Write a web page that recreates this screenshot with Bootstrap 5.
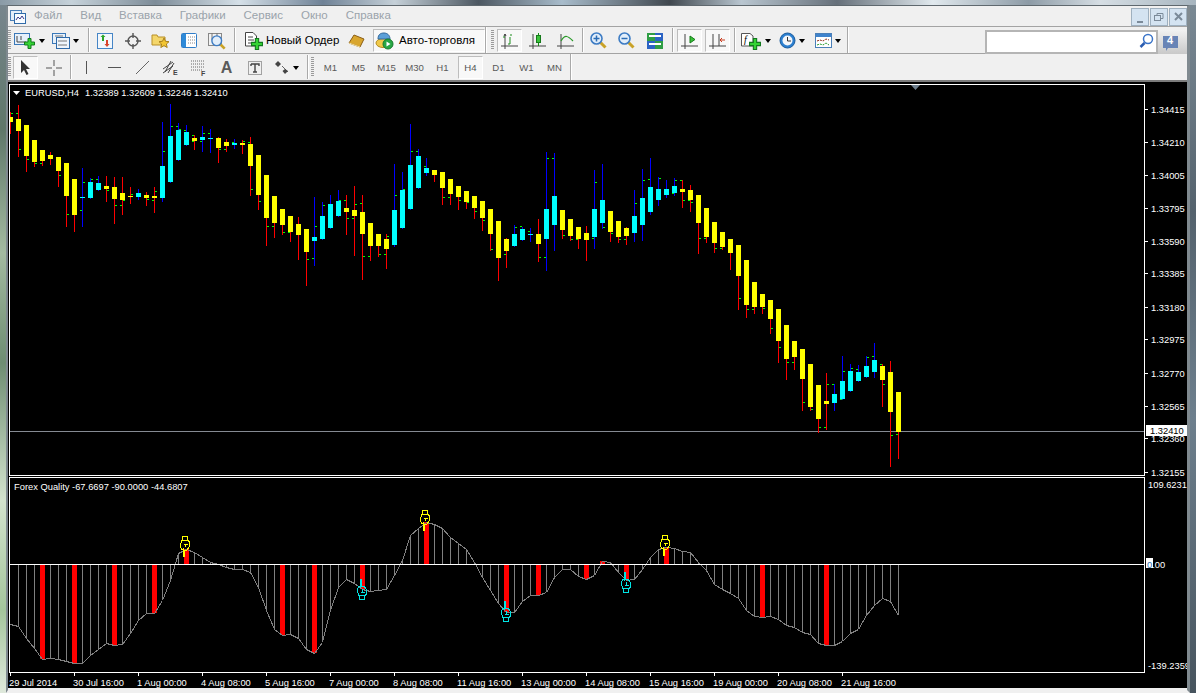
<!DOCTYPE html>
<html lang="ru">
<head>
    <meta charset="UTF-8">
    <meta name="viewport" content="width=device-width, initial-scale=1.0">
    <title>MetaTrader</title>
    <link href="https://cdn.jsdelivr.net/npm/bootstrap@5.3.0/dist/css/bootstrap.min.css" rel="stylesheet">
    <style>
        html, body { height: 100%; }
        body {
            margin: 0;
            overflow: hidden;
            background: #f0f0f0;
            font-family: "Liberation Sans", Arial, sans-serif;
            font-size: 11px;
            color: #000;
        }
        .desk { width: 1196px; height: 693px; }
        .desk-top {
            height: 5px;
            background: linear-gradient(90deg, #8a9aa6 0, #c6d2da 6%, #7d8c98 13%, #d5e0e8 20%, #6f8296 27%, #c5d0d8 33%, #4d5862 40%, #a8bccb 47%, #40484f 56%, #b9c6d0 62%, #66707a 70%, #e1e9ee 78%, #8d9ba6 86%, #d6dee4 92%, #a7b5bf 100%);
            border-bottom: 0;
        }
        .desk-left {
            width: 6px;
            background: linear-gradient(180deg, #78868e 0, #5f7769 18%, #a3baa0 36%, #6e8d72 52%, #d3e3cd 72%, #a4c59c 88%, #dfe9dc 100%);
        }
        .desk-right {
            width: 6px;
            background: linear-gradient(180deg, #7a8994 0, #54626d 30%, #6d7f8d 60%, #47545e 100%);
        }
        .win {
            width: 1184px;
            background: #f0f0f0;
            border-top: 1px solid #5f686e;
            border-left: 2px solid #7f898f;
            border-right: 3px solid #808a90;
            border-bottom: 3px solid #f0f0f0;
        }
        .menu-row { height: 20px; }
        .app-icon { margin-left: 2px; margin-right: 8px; }
        .menu-item { color: #9aa3ab; font-size: 11.5px; margin-right: 18px; }
        .win-btn {
            width: 18px;
            height: 18px;
            margin-left: 1px;
            margin-top: 1px;
            border: 1px solid #9fb0bf;
            background: #d4e3f1;
        }
        .tb-row { height: 27px; border-top: 1px solid #a3a3a3; }
        .tb-group { padding-top: 2px; height: 26px; }
        .grip {
            width: 3px;
            height: 20px;
            margin-top: 1px;
            background: repeating-linear-gradient(180deg, #9a9a9a 0 1px, transparent 1px 2px);
        }
        .grip-a { margin-right: 2px; }
        .grip-b { margin-left: 4px; margin-right: 3px; }
        .tb-btn {
            --bs-btn-padding-x: 0;
            --bs-btn-padding-y: 0;
            --bs-btn-border-radius: 0;
            --bs-btn-border-width: 1px;
            --bs-btn-border-color: transparent;
            --bs-btn-active-border-color: #bdbdbd;
            --bs-btn-active-bg: #f8f8f8;
            --bs-btn-active-color: #555;
            --bs-btn-font-size: 9.6px;
            --bs-btn-color: #5a5a5a;
            --bs-btn-line-height: 1;
            width: 25px;
            height: 23px;
            margin-right: 3px;
            display: flex;
            align-items: center;
            justify-content: center;
            flex: none;
        }
        .tb-btn.active { border-right-color: #fff; border-bottom-color: #fff; }
        .tb-drop { width: 33px; gap: 3px; }
        .tb-order { width: 103px; justify-content: flex-start; padding-left: 5px; gap: 3px; --bs-btn-font-size: 11.5px; --bs-btn-color: #000; }
        .tb-auto { width: 112px; margin-left: 1px; margin-right: 0; justify-content: flex-start; padding-left: 1px; gap: 5px; --bs-btn-font-size: 11.5px; --bs-btn-active-color: #000; }
        .tb-sep { width: 2px; height: 24px; margin: -1px 2px 0; background: #a9a9a9; border-right: 1px solid #fff; flex: none; }
        .sep-wide { margin-left: 3px; }
        .sep-tight { margin-left: 1px; }
        .sep-after { margin-right: 3px; }
        .tb-end { width: 2px; height: 27px; margin-top: -2px; background: #a9a9a9; border-right: 1px solid #fff; flex: none; }
        .caret { width: 0; height: 0; border: 3.5px solid transparent; border-top: 4px solid #000; border-bottom: 0; flex: none; }
        .search-box { width: 173px; height: 24px; margin-top: 1px; margin-right: 0; }
        .search-box .form-control {
            border: 2px solid #b5b5b5;
            border-radius: 0;
            padding: 0 22px 0 4px;
            font-size: 11px;
            height: 24px;
        }
        .search-icon { right: 4px; top: 3px; }
        .chat-btn {
            --bs-btn-border-radius: 0;
            --bs-btn-padding-x: 0;
            --bs-btn-padding-y: 0;
            --bs-btn-border-width: 0;
            width: 29px;
            height: 24px;
            margin-top: 1px;
            margin-right: 0;
            background: linear-gradient(180deg, #f1f1f1, #c9c9c9);
        }
        .chat-num { left: 0; width: 24px; top: 4px; color: #fff; font-weight: 700; font-size: 11px; line-height: 12px; text-align: center; }
        .chart-wrap { border-top: 2px solid #7c7c7c; background: #000; height: 608px; overflow: hidden; }
        .chart-wrap svg { display: block; }
        .chart-wrap rect, .chart-wrap polyline, .hand { shape-rendering: crispEdges; }
        .ct { font-family: "Liberation Sans", Arial, sans-serif; font-size: 9.33px; fill: #fff; }
    </style>
</head>
<body>
<svg width="0" height="0" class="position-absolute">
    <defs>
        <symbol id="plus" viewBox="0 0 11 11"><polygon points="4,.5 7,.5 7,4 10.5,4 10.5,7 7,7 7,10.5 4,10.5 4,7 .5,7 .5,4 4,4" fill="#35d335" stroke="#13791f"/></symbol>
        <symbol id="lens" viewBox="0 0 17 17"><path d="M10.5 10.5L15.5 15.5" stroke="#c9a227" stroke-width="3"/><circle cx="6.5" cy="6.5" r="5.5" fill="#e2eefa" stroke="#3d7cc4" stroke-width="1.6"/></symbol>
    </defs>
</svg>
<div class="desk d-flex flex-column">
    <div class="desk-top"></div>
    <div class="d-flex flex-grow-1">
        <div class="desk-left"></div>
        <div class="win d-flex flex-column">
            <!-- меню -->
            <div class="menu-row d-flex align-items-center">
                <svg class="app-icon" width="16" height="16" viewBox="0 0 16 16"><rect x=".5" y="2.5" width="11" height="10" fill="#e4eefa" stroke="#4a7fb8"/><rect x="4.5" y="5.5" width="11" height="10" fill="#f7fbff" stroke="#2f6aa8"/><path d="M6 12l2-3 2 2 2-3 2 3" fill="none" stroke="#3a3a8a"/></svg>
                <span class="menu-item">Файл</span>
                <span class="menu-item">Вид</span>
                <span class="menu-item">Вставка</span>
                <span class="menu-item">Графики</span>
                <span class="menu-item">Сервис</span>
                <span class="menu-item">Окно</span>
                <span class="menu-item">Справка</span>
                <div class="ms-auto d-flex">
                    <div class="win-btn d-flex align-items-end justify-content-center"><svg width="10" height="7" viewBox="0 0 10 7"><rect x="2" y="3" width="6" height="2" fill="#7b8a99"/></svg></div>
                    <div class="win-btn d-flex align-items-center justify-content-center"><svg width="10" height="10" viewBox="0 0 10 10" fill="none" stroke="#7b8a99"><rect x=".5" y="3.5" width="6" height="5"/><path d="M3 3V1.5H9V6.5H7" /></svg></div>
                    <div class="win-btn d-flex align-items-center justify-content-center"><svg width="9" height="9" viewBox="0 0 9 9" stroke="#7b8a99" stroke-width="2"><path d="M1 1L8 8M8 1L1 8"/></svg></div>
                </div>
            </div>

            <!-- верхняя панель -->
            <div class="tb-row d-flex">
                <div class="tb-group d-flex">
                    <div class="grip grip-a"></div>
                    <button class="btn tb-btn tb-drop"><svg width="22" height="16" viewBox="0 0 22 16"><rect x=".5" y=".5" width="15" height="11" fill="#e6f0fa" stroke="#3a78b8"/><path d="M3 3v6h9M3 3M7 3v4" fill="none" stroke="#444"/><use href="#plus" x="10" y="5" width="11" height="11"/></svg><span class="caret"></span></button>
                    <button class="btn tb-btn tb-drop me-1"><svg width="18" height="16" viewBox="0 0 18 16"><rect x=".5" y=".5" width="13" height="10" fill="#e6f0fa" stroke="#3a78b8"/><rect x="4.5" y="4.5" width="13" height="11" fill="#eef5fc" stroke="#2f6aa8"/><path d="M3 3H11M6 8H15M6 12H15" stroke="#777"/></svg><span class="caret"></span></button>
                    <div class="tb-sep"></div>
                    <button class="btn tb-btn"><svg width="16" height="16" viewBox="0 0 16 16"><rect x=".5" y=".5" width="15" height="15" fill="#f2f7fc" stroke="#4585c6"/><path d="M5 8V4H3.5L6 1.5 8.500 4H7V8Z" fill="#2aa52a"/><path d="M9 7v4H7.500L10 14l2.500-3H11V7Z" fill="#d8432a"/></svg></button>
                    <button class="btn tb-btn"><svg width="16" height="16" viewBox="0 0 16 16" fill="none" stroke="#555" stroke-width="1.4"><circle cx="8" cy="8" r="5"/><path d="M8 0V5M8 11V16M0 8H5M11 8H16"/></svg></button>
                    <button class="btn tb-btn"><svg width="19" height="17" viewBox="0 0 19 17"><path d="M1 3h5l1 2h7v8H1Z" fill="#f4d66a" stroke="#b88f26"/><path d="M13 6l1.500 3.300 3.500.4-2.600 2.300.8 3.500-3.200-1.800-3.200 1.800.8-3.500L8 9.700l3.500-.4Z" fill="#f2c531" stroke="#a9811c"/></svg></button>
                    <button class="btn tb-btn"><svg width="16" height="15" viewBox="0 0 16 15"><rect x=".5" y=".5" width="15" height="14" rx="1" fill="#fff" stroke="#2f7dc8"/><rect x="1" y="1" width="4" height="13" fill="#2f8ad8"/><path d="M7 4H14M7 7H14M7 10H14" stroke="#888" stroke-dasharray="1 1"/></svg></button>
                    <button class="btn tb-btn"><svg width="18" height="18" viewBox="0 0 18 18"><rect x=".5" y="1.500" width="13" height="12" fill="#f3f3f3" stroke="#888"/><path d="M4 1V8M9 1V6" stroke="#777"/><use href="#lens" x="3" y="3" width="15" height="15"/></svg></button>
                    <div class="tb-sep"></div>
                    <button class="btn tb-btn tb-order"><svg width="19" height="18" viewBox="0 0 19 18"><path d="M1.500.5H9L12.500 4V14H1.500Z" fill="#fff" stroke="#444"/><path d="M4 5H9M4 8H10M4 11H8" stroke="#444"/><use href="#plus" x="7" y="6" width="12" height="12"/></svg><span class="text-nowrap">Новый Ордер</span></button>
                    <button class="btn tb-btn"><svg width="17" height="14" viewBox="0 0 17 14"><path d="M1 9L6 1 16 5 12 13Z" fill="#d9a62e" stroke="#8a5d14"/><path d="M1 9L12 13" stroke="#f7e3a1"/></svg></button>
                    <button class="btn tb-btn tb-auto active"><svg width="19" height="18" viewBox="0 0 19 18"><ellipse cx="8" cy="11" rx="7" ry="4.500" fill="#f0c94a" stroke="#b38b1f"/><path d="M3 7C3 2 6 1 9 1s6 2 6 6Z" fill="#5b9fd8" stroke="#34699c"/><circle cx="13" cy="12" r="5" fill="#28a745" stroke="#167a2c"/><path d="M11.500 9.500V14.500L15.500 12Z" fill="#fff"/></svg><span class="text-nowrap">Авто-торговля</span></button>
                    <div class="tb-end"></div>
                    <div class="grip grip-b"></div>
                    <button class="btn tb-btn active"><svg width="17" height="17" viewBox="0 0 17 17"><path d="M0 14H17M4 2V17M13 12" stroke="#444" fill="none"/><path d="M2 5H4M9 5V12M7 12H9M9 3H11" stroke="#1b8c1b" fill="none"/><path d="M4 2L3 4M4 2L5 4" stroke="#444"/></svg></button>
                    <button class="btn tb-btn"><svg width="17" height="17" viewBox="0 0 17 17"><path d="M0 14H17M4 2V17" stroke="#444" fill="none"/><path d="M9.500 1V14" stroke="#1b8c1b"/><rect x="7.500" y="3.500" width="4" height="7" fill="#3ac23a" stroke="#167a1b"/></svg></button>
                    <button class="btn tb-btn"><svg width="17" height="17" viewBox="0 0 17 17"><path d="M0 14H17M4 2V17" stroke="#444" fill="none"/><path d="M4 9C8 2 11 4 16 9" stroke="#2a9a2a" fill="none" stroke-width="1.200"/></svg></button>
                    <div class="tb-sep sep-tight"></div>
                    <button class="btn tb-btn"><svg width="17" height="17" viewBox="0 0 17 17"><use href="#lens" width="17" height="17"/><path d="M3.500 6.500H9.500M6.500 3.500V9.500" stroke="#2a6cb5" stroke-width="1.500"/></svg></button>
                    <button class="btn tb-btn"><svg width="17" height="17" viewBox="0 0 17 17"><use href="#lens" width="17" height="17"/><path d="M3.500 6.500H9.500" stroke="#2a6cb5" stroke-width="1.500"/></svg></button>
                    <button class="btn tb-btn"><svg width="16" height="16" viewBox="0 0 16 16"><rect width="8" height="8" fill="#2f9e44"/><rect x="8" width="8" height="8" fill="#2b63c4"/><rect y="8" width="8" height="8" fill="#2b63c4"/><rect x="8" y="8" width="8" height="8" fill="#2f9e44"/><path d="M2 3H14M2 11H14" stroke="#fff" stroke-width="2"/></svg></button>
                    <div class="tb-sep sep-after"></div>
                    <button class="btn tb-btn active"><svg width="17" height="17" viewBox="0 0 17 17"><path d="M0 14H17M4 2V17" stroke="#444" fill="none"/><path d="M9 4V11L14 7.500Z" fill="#39c239" stroke="#167a1b"/></svg></button>
                    <button class="btn tb-btn active"><svg width="17" height="17" viewBox="0 0 17 17"><path d="M0 14H17M4 2V17M10 2V14" stroke="#444" fill="none"/><path d="M11 8H16M13 6L11 8 13 10" stroke="#c8391b" fill="none"/></svg></button>
                    <div class="tb-sep sep-tight sep-after"></div>
                    <button class="btn tb-btn tb-drop"><svg width="22" height="18" viewBox="0 0 22 18"><path d="M1.500 1.500H10L13 4V14H1.500Z" fill="#fff" stroke="#555"/><text x="4" y="11" font-size="10" font-style="italic" font-family="Liberation Serif">f</text><use href="#plus" x="9" y="6" width="12" height="12"/></svg><span class="caret"></span></button>
                    <button class="btn tb-btn tb-drop"><svg width="17" height="17" viewBox="0 0 17 17"><circle cx="8.500" cy="8.500" r="7.500" fill="#2b7fd0" stroke="#195a9c"/><circle cx="8.500" cy="8.500" r="5" fill="#f3f6fa"/><path d="M8.500 5V9H12" stroke="#333" fill="none"/></svg><span class="caret"></span></button>
                    <button class="btn tb-btn tb-drop"><svg width="17" height="15" viewBox="0 0 17 15"><rect x=".5" y=".5" width="16" height="14" fill="#fff" stroke="#4a7fb8"/><rect x="1" y="1" width="15" height="3" fill="#3f83cc"/><path d="M2 8L5 7 8 8 11 6 14 7" stroke="#8a2a14" stroke-dasharray="2 1" fill="none"/><path d="M2 12L5 11 8 12 11 10 14 12" stroke="#249a2b" stroke-dasharray="2 1" fill="none"/></svg><span class="caret"></span></button>
                    <div class="tb-end"></div>
                </div>
                <div class="ms-auto d-flex tb-group">
                    <div class="search-box input-group position-relative">
                        <input class="form-control" type="text" aria-label="search">
                        <svg class="search-icon position-absolute" width="15" height="16" viewBox="0 0 15 16" fill="none"><circle cx="9" cy="6" r="4.500" stroke="#3a74c8" stroke-width="1.500"/><path d="M5.500 10L1.500 14" stroke="#2a5cb0" stroke-width="2.500"/></svg>
                    </div>
                    <button class="btn chat-btn position-relative"><svg width="18" height="16" viewBox="0 0 18 16" class="d-block ms-1 mt-1"><path d="M1 0H16V12H6L4 15V12H1Z" fill="#6884b6"/></svg><span class="chat-num position-absolute">4</span></button>
                </div>
            </div>

            <!-- нижняя панель -->
            <div class="tb-row d-flex">
                <div class="tb-group d-flex">
                    <div class="grip grip-a"></div>
                    <button class="btn tb-btn active"><svg width="11" height="15" viewBox="0 0 11 15"><path d="M1 0V13L4 10 6.500 15 8.500 14 6 9H10Z" fill="#333"/></svg></button>
                    <button class="btn tb-btn"><svg width="16" height="16" viewBox="0 0 16 16" stroke="#555"><path d="M8 0V6M8 10V16M0 8H6M10 8H16"/></svg></button>
                    <div class="tb-sep sep-tight"></div>
                    <button class="btn tb-btn"><svg width="3" height="13" viewBox="0 0 3 13"><path d="M1.500 0V13" stroke="#555"/></svg></button>
                    <button class="btn tb-btn"><svg width="13" height="3" viewBox="0 0 13 3"><path d="M0 1.500H13" stroke="#555"/></svg></button>
                    <button class="btn tb-btn"><svg width="13" height="13" viewBox="0 0 13 13"><path d="M0 13L13 0" stroke="#666"/></svg></button>
                    <button class="btn tb-btn"><svg width="17" height="16" viewBox="0 0 17 16"><path d="M1 9L11 2M1 13L11 6M3 12L9 1M6 13L12 3" stroke="#444" fill="none"/><text x="11" y="15" font-size="7" font-weight="700" font-family="Liberation Sans" fill="#444">E</text></svg></button>
                    <button class="btn tb-btn"><svg width="17" height="16" viewBox="0 0 17 16"><path d="M1 1H15M1 4H15M1 7H15M1 10H12" stroke="#666" stroke-dasharray="1 1"/><text x="11" y="16" font-size="7" font-weight="700" font-family="Liberation Sans" fill="#444">F</text></svg></button>
                    <button class="btn tb-btn fw-bold"><span class="fs-6 lh-1">A</span></button>
                    <button class="btn tb-btn"><svg width="14" height="14" viewBox="0 0 14 14"><rect x=".5" y=".5" width="13" height="13" fill="none" stroke="#555" stroke-dasharray="1 1"/><path d="M3 3H11V5M3 5V3M7 3V11M5 11H9" stroke="#444" stroke-width="1.400" fill="none"/></svg></button>
                    <button class="btn tb-btn tb-drop"><svg width="16" height="13" viewBox="0 0 16 13"><path d="M4 0L7 3 4 6 1 3Z" fill="#444"/><path d="M8 5L14 11" stroke="#666"/><path d="M11 8L14 10 11 13 8.500 10Z" fill="#444"/></svg><span class="caret"></span></button>
                    <div class="tb-sep sep-tight"></div>
                    <div class="grip"></div>
                    <div class="ms-1"></div>
                    <button class="btn tb-btn ms-n1">M1</button>
                    <button class="btn tb-btn">M5</button>
                    <button class="btn tb-btn">M15</button>
                    <button class="btn tb-btn">M30</button>
                    <button class="btn tb-btn">H1</button>
                    <button class="btn tb-btn active">H4</button>
                    <button class="btn tb-btn">D1</button>
                    <button class="btn tb-btn">W1</button>
                    <button class="btn tb-btn">MN</button>
                    <div class="tb-end"></div>
                </div>
            </div>

            <!-- график -->
            <div class="chart-wrap">
                <svg id="chart" width="1179" height="608" viewBox="8 82 1179 608" xmlns="http://www.w3.org/2000/svg"></svg>
            </div>
        </div>
        <div class="desk-right"></div>
    </div>
</div>

<script src="https://cdn.jsdelivr.net/npm/bootstrap@5.3.0/dist/js/bootstrap.bundle.min.js"></script>
<script>
    // свечи: [high, top, bottom, low, цвет] в координатах зума (y = 85 + v / 3)
    const candles = [
        [80,96,110,143,'y'],[60,102,138,213,'y'],[120,120,213,258,'y'],[165,165,231,243,'y'],[195,195,228,240,'y'],[201,210,222,237,'y'],
        [216,216,258,303,'y'],[234,234,333,423,'y'],[282,282,390,438,'y'],[249,336,339,423,'c'],[279,291,339,339,'c'],[273,294,315,315,'c'],
        [273,303,312,348,'y'],[276,306,342,414,'y'],[276,324,345,387,'y'],[306,333,336,354,'y'],[312,324,336,342,'c'],[321,330,339,360,'y'],
        [306,333,339,381,'y'],[111,243,339,348,'c'],[57,153,291,291,'c'],[114,135,225,225,'c'],[120,141,180,180,'c'],[150,159,168,192,'y'],
        [123,156,165,198,'c'],[132,159,162,201,'c'],[156,159,189,231,'y'],[162,171,183,198,'y'],[162,174,180,189,'c'],[165,174,180,204,'y'],
        [156,177,243,330,'y'],[210,210,330,372,'y'],[270,270,399,480,'y'],[333,333,414,456,'y'],[372,372,420,447,'y'],[393,393,441,468,'y'],
        [396,417,450,522,'y'],[432,432,501,600,'y'],[336,456,468,540,'c'],[351,393,462,462,'c'],[330,357,429,429,'c'],[315,348,393,393,'c'],
        [330,369,381,447,'y'],[303,375,393,510,'y'],[330,381,447,582,'y'],[414,414,483,525,'y'],[447,447,483,513,'y'],[447,462,492,549,'y'],
        [237,375,480,484,'c'],[261,315,429,429,'c'],[117,240,372,372,'c'],[192,213,309,309,'c'],[219,249,264,270,'c'],[255,255,270,288,'y'],
        [261,261,309,357,'y'],[282,282,327,357,'y'],[303,303,336,372,'y'],[318,318,351,369,'y'],[333,333,369,399,'y'],[348,348,399,435,'y'],
        [372,372,447,495,'y'],[408,408,519,585,'y'],[459,462,498,546,'y'],[420,447,483,483,'c'],[426,432,465,465,'c'],[429,447,450,468,'c'],
        [402,447,477,528,'y'],[201,372,462,555,'c'],[204,333,420,495,'c'],[375,375,435,459,'y'],[402,402,453,465,'y'],[426,426,462,489,'y'],
        [423,444,465,525,'y'],[255,372,456,489,'c'],[237,345,414,430,'c'],[378,378,441,467,'y'],[408,408,456,471,'y'],[426,429,453,477,'y'],
        [315,393,444,468,'c'],[252,339,420,465,'c'],[219,306,381,387,'c'],[276,312,345,360,'c'],[285,312,330,336,'c'],[279,303,324,330,'c'],
        [285,312,321,366,'y'],[300,315,345,378,'y'],[330,330,414,504,'y'],[369,369,456,471,'y'],[411,411,474,501,'y'],[441,441,486,492,'y'],
        [462,462,504,552,'y'],[480,480,573,672,'y'],[525,525,660,696,'y'],[591,591,666,684,'y'],[627,627,666,684,'y'],[645,645,702,744,'y'],
        [672,672,768,831,'y'],[720,720,822,882,'y'],[768,768,816,852,'y'],[792,792,882,975,'y'],[837,837,966,975,'y'],[900,900,1002,1041,'y'],
        [864,948,957,1032,'y'],[897,927,954,975,'c'],[813,888,942,942,'c'],[837,858,918,918,'c'],[840,861,888,888,'c'],[813,843,876,876,'c'],
        [774,825,861,876,'c'],[837,843,885,963,'y'],[828,861,981,1143,'y'],[921,921,1041,1119,'y']
    ];

    // зелёные риски: [сдвиг x, сдвиг y, пары x,y зума]
    const ticks = [
        [0,85,[33,85,48,85,57,193,81,223,105,235,120,235,177,271,201,388,240,376,250,291,273,283,288,283,321,315,345,361,360,361,369,345,393,327,441,343,456,345,465,319,489,199,513,124,528,124,537,133,552,136,576,151,576,167,600,169,609,145,624,145,657,193,672,191,696,170,729,169,744,172,753,313,777,349,801,424,816,424,849,442,864,442]],
        [300,85,[21,523,36,520,45,424,69,361,117,346,132,346,141,400,156,400,165,358,180,355,189,514,204,514,237,508,252,508,261,454,285,331,309,313,333,199,348,199,372,244,429,337,444,337,477,346,501,352,525,379,549,406,573,493,612,508,645,427,660,424,684,439,717,517,732,517,741,220,756,220,789,451,813,463,828,463,876,460,885,292]],
        [600,85,[9,427,33,445,57,463,72,463,105,355,129,286,144,283,177,280,216,325,225,286,240,286,249,346,264,346,273,352,297,460,312,460,345,490,360,490]],
        [700,280,[117,55,141,88,156,88,189,85,213,145,237,202,261,247,276,247,309,367,333,388,357,442,372,442,381,313,396,313,420,358,429,274,453,265,468,268,501,232,516,229,540,253,549,313,573,466,588,463]]
    ];

    // индикатор: y = 470 + v / 3
    const curve = [463,468,505,535,566,564,568,574,580,578,556,536,520,526,523,490,450,428,430,390,330,250,236,247,262,277,283,292,298,298,307,350,420,478,495,492,505,
        538,548,515,420,352,328,340,358,364,360,357,315,270,196,175,155,162,174,200,220,237,277,320,360,400,425,426,392,375,376,365,322,296,296,318,328,315,273,
        277,305,330,328,297,260,238,232,235,242,246,275,300,343,358,370,385,420,438,442,438,447,465,472,485,493,518,525,525,512,490,476,435,405,383,393,436];
    const redBars = [4,8,13,18,22,34,38,44,52,62,66,72,74,77,82,94,102];

    const prices = [['1.34415',109],['1.34210',142],['1.34005',175],['1.33795',208],['1.33590',241],['1.33385',273],['1.33180',307],['1.32975',339],['1.32770',373],['1.32565',406],['1.32360',438],['1.32155',472]];
    const times = ['29 Jul 2014','30 Jul 16:00','1 Aug 00:00','4 Aug 08:00','5 Aug 16:00','7 Aug 00:00','8 Aug 08:00','11 Aug 16:00','13 Aug 00:00','14 Aug 08:00','15 Aug 16:00','19 Aug 00:00','20 Aug 08:00','21 Aug 16:00'];
    const handsUp = [[357,579],[501,601],[621,572]];
    const handsDown = [[180,536],[420,510],[660,535]];

    function rect(x, y, w, h, fill) {
        return `<rect x="${x}" y="${y}" width="${w}" height="${h}" fill="${fill}"/>`;
    }

    function text(x, y, s, extra = '') {
        return `<text class="ct" x="${x}" y="${y}" ${extra}>${s}</text>`;
    }

    function hand(x, y, up) {
        const color = up ? '#00e5e5' : '#ffff00';
        const tf = up ? `translate(${x} ${y + 21}) scale(1 -1)` : `translate(${x} ${y})`;
        return `<g class="hand" transform="${tf}" fill="none" stroke="${color}">
            <path d="M2.500 .5H7.500L8 4.500H2Z"/>
            <path d="M2 4.500L.5 8V11L2 13.500 3 13V20.500H4.500V14H7L9.500 10V6L8 4.500"/>
            <path d="M4 8H8M5 8V11"/></g>`;
    }

    function drawChart() {
        let s = '';
        // рамки панелей
        s += `<rect x="9.5" y="84.5" width="1135" height="391" fill="none" stroke="#fff"/>`;
        s += `<rect x="9.5" y="477.5" width="1135" height="195" fill="none" stroke="#fff"/>`;

        // текущая цена
        s += rect(10, 431, 1134, 1, '#858a92');
        s += `<polygon points="911,85 920,85 915.500,90" fill="#6e7f8e"/>`;

        // свечи
        candles.forEach((c, i) => {
            const up = c[4] === 'c';
            const y = v => Math.round(85 + v / 3);
            const wickX = 10 + 8 * i;
            const bodyX = Math.max(10, wickX - 2);
            s += rect(wickX, y(c[0]), 1, y(c[3]) - y(c[0]) + 1, up ? '#0000ff' : '#ff0000');
            s += rect(bodyX, y(c[1]), wickX + 3 - bodyX, Math.max(1, y(c[2]) - y(c[1])), up ? '#00ffff' : '#ffff00');
        });
        ticks.forEach(([dx, dy, pts]) => {
            for (let k = 0; k < pts.length; k += 2) {
                s += rect(dx + Math.round(pts[k] / 3), dy + Math.round(pts[k + 1] / 3), 2, 1, '#00ff00');
            }
        });

        // индикатор
        const zero = 564;
        curve.forEach((v, i) => {
            const x = 10 + 8 * i;
            const y = Math.round(470 + v / 3);
            if (i > 0) s += rect(x, Math.min(y, zero), 1, Math.abs(y - zero), '#808080');
            if (redBars.includes(i)) s += rect(x - 2, Math.min(y, zero), 5, Math.abs(y - zero), '#ff0000');
        });
        const pts = curve.map((v, i) => `${10.5 + 8 * i},${Math.round(470 + v / 3) + 0.5}`).join(' ');
        s += `<polyline points="${pts}" fill="none" stroke="#808080"/>`;
        s += rect(10, zero, 1134, 1, '#ffffff');
        handsDown.forEach(h => { s += hand(h[0], h[1], false); });
        handsUp.forEach(h => { s += hand(h[0], h[1], true); });

        // шкала цен
        prices.forEach(([p, y]) => {
            s += rect(1145, y, 3, 1, '#fff');
            s += text(1151, y + 3.5, p);
        });
        s += rect(1146, 425, 41, 11, '#fff');
        s += text(1150, 434, '1.32410', 'style="fill:#000"');
        s += text(1148, 487.5, '109.6231');
        s += rect(1146, 558, 7, 10, '#fff');
        s += `<text class="ct" x="1147" y="568"><tspan style="fill:#2a6fb0">0</tspan>.00</text>`;
        s += text(1148, 669, '-139.2359');

        // шкала времени
        times.forEach((t, k) => {
            s += rect(10 + 64 * k, 673, 1, 3, '#fff');
            s += text(9 + 64 * k, 685.5, t);
        });

        // легенды
        s += `<polygon points="13,91 20,91 16.500,95" fill="#fff"/>`;
        s += text(25, 96, 'EURUSD,H4');
        s += text(85, 96, '1.32389 1.32609 1.32246 1.32410');
        s += text(14, 490, 'Forex Quality -67.6697 -90.0000 -44.6807');

        document.getElementById('chart').innerHTML = s;
    }

    drawChart();
</script>
</body>
</html>
